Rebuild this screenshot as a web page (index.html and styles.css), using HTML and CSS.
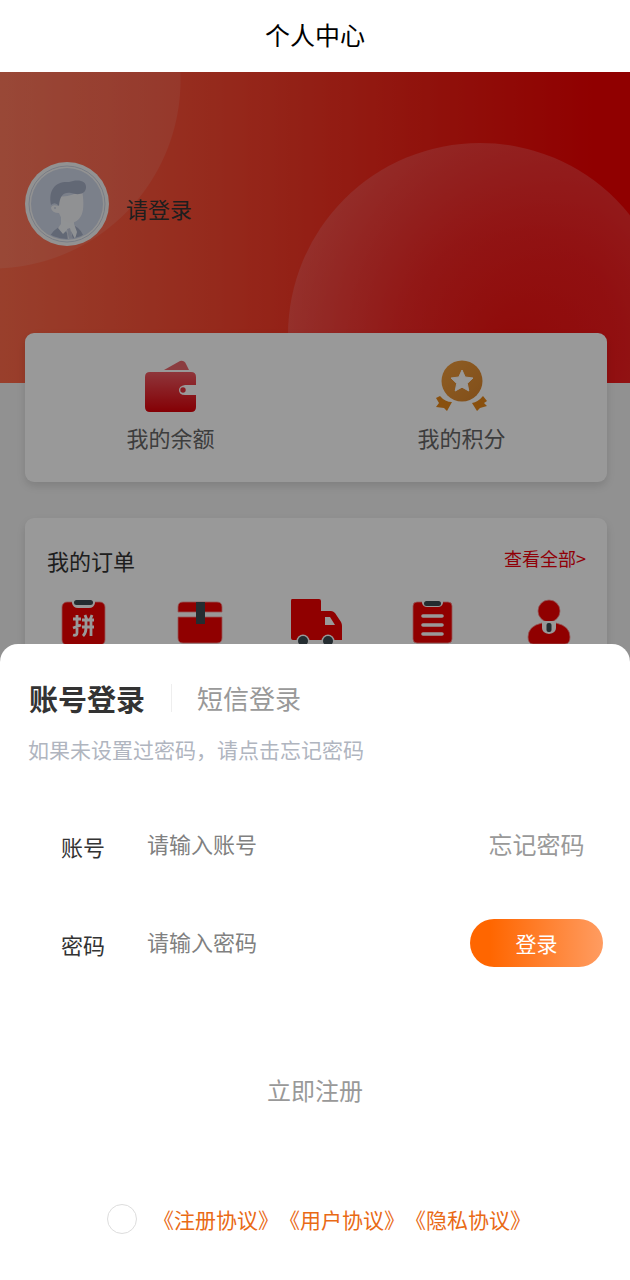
FILE: index.html
```html
<!DOCTYPE html>
<html lang="zh-CN">
<head>
<meta charset="utf-8">
<meta name="viewport" content="width=device-width, initial-scale=1">
<title>个人中心</title>
<link rel="stylesheet" href="styles.css">
</head>
<body>
<header class="topbar"><h1 class="topbar-title">个人中心</h1></header>
<main class="page">
  <section class="hero">
    <svg class="avatar" viewBox="0 0 84 84" aria-hidden="true">
      <defs><clipPath id="face"><circle cx="42" cy="42" r="35"/></clipPath></defs>
      <circle cx="42" cy="42" r="42" fill="#f4f4f4"/>
      <circle cx="42" cy="42" r="38" fill="none" stroke="#c9d0df" stroke-width="1"/>
      <circle cx="42" cy="42" r="36" fill="#cdd5e6"/>
      <g clip-path="url(#face)">
        <path d="M23 80Q25 69 36 64L42 71L50 64Q58 68 60 80Z" fill="#a4adc4"/>
        <path d="M36 54V62L33 66L38 72L42 68L43 79H48L46 69L50 77L52 70L49 62V54Z" fill="#f1f3f7"/>
        <path d="M42 67L45 66L48 78L44 78Z" fill="#c3cadb"/>
        <path d="M34 34Q44 36 57 28C60 45 59 60 45 61Q37 60 34 51Q27 51 26 46Q27 42 33 44Z" fill="#f1f2f5"/>
        <path d="M26 43C23 27 31 19 44 20C52 17 62 18 61 26C60 33 52 33 46 31C38 30 35 34 34 44Q30 39 26 43Z" fill="#a4adc4"/>
        <circle cx="30" cy="46" r="1" fill="#c7cede"/>
      </g>
    </svg>
    <span class="hero-name">请登录</span>
  </section>

  <section class="card wallet">
    <div class="wallet-item">
      <svg class="icon" viewBox="0 0 52 52" aria-hidden="true">
        <defs><linearGradient id="wal" x2="0" y2="1"><stop offset="0" stop-color="#ee5a62"/><stop offset="1" stop-color="#dd0008"/></linearGradient></defs>
        <path d="M19 10L35 1Q39 0 41 4L44 10Z" fill="#e8666b"/>
        <path d="M5 12H46Q51 12 51 17V25H40Q34 26 34 30Q34 35 40 35H51V47Q51 52 46 52H5Q0 52 0 47V17Q0 12 5 12Z" fill="url(#wal)"/>
        <circle cx="38" cy="30" r="2.700" fill="#e5333d"/>
      </svg>
      <span>我的余额</span>
    </div>
    <div class="wallet-item">
      <svg class="icon" viewBox="0 0 52 52" aria-hidden="true">
        <defs><linearGradient id="med" x2="1" y2="1"><stop offset="0" stop-color="#ee9c3c"/><stop offset="1" stop-color="#d8832b"/></linearGradient></defs>
        <path d="M4 36Q9 42 16 42L11 51L8 48L0 47L3 43L0 38Z M47 36Q42 42 36 43L41 51L44 48L51 46L48 43L51 41Z" fill="#e58618"/>
        <circle cx="26" cy="21" r="20.500" fill="url(#med)"/>
        <path d="M26 10L29.200 17L37 18L31.300 23.400L32.800 31L26 27.200L19.200 31L20.700 23.400L15 18L22.800 17Z" fill="#fff" stroke="#fff" stroke-width="1" stroke-linejoin="round"/>
      </svg>
      <span>我的积分</span>
    </div>
  </section>

  <section class="card orders">
    <div class="orders-head">
      <h2 class="orders-title">我的订单</h2>
      <a class="orders-all" href="#">查看全部&gt;</a>
    </div>
    <div class="orders-list">
      <svg class="icon" viewBox="0 0 52 52" aria-hidden="true">
        <rect x="5" y="3" width="43" height="43" rx="5" fill="#f00000" stroke="#fa9292" stroke-width=".8"/>
        <path d="M15 2H38V4Q37 9 32 9H21Q16 9 15 4Z" fill="#fff"/>
        <rect x="17" y="1" width="19" height="5" rx="2.500" fill="#3c4a50"/>
        <path d="M16 20H24M20 16V34Q20 37 16 36M16 29L24 26M25 21H37M25 28H37M29 21V29Q29 34 26 37M34 21V37M28 16L30 21M35 16L33 21" fill="none" stroke="#fff" stroke-width="2.800"/>
      </svg>
      <svg class="icon" viewBox="0 0 52 52" aria-hidden="true">
        <path d="M9 3H43Q48 3 48 8V13H4V8Q4 3 9 3ZM4 18H48V39Q48 44 43 44H9Q4 44 4 39Z" fill="#f00000" stroke="#fa9292" stroke-width=".8"/>
        <rect x="22" y="3" width="9" height="22" fill="#3c4a50"/>
      </svg>
      <svg class="icon" viewBox="0 0 52 52" aria-hidden="true">
        <path d="M2 0H29Q31 0 31 2V12H41Q43 12 45 14L51 23Q52 25 52 27V41H3Q1 41 1 39V2Q1 0 2 0Z" fill="#f00000"/>
        <path d="M35 18H40L45 26H35Z" fill="#fff"/>
        <circle cx="13" cy="42" r="6.500" fill="#fff"/><circle cx="38" cy="42" r="6.500" fill="#fff"/>
        <circle cx="13" cy="42" r="5" fill="#3c4a50"/><circle cx="38" cy="42" r="5" fill="#3c4a50"/>
      </svg>
      <svg class="icon" viewBox="0 0 52 52" aria-hidden="true">
        <rect x="7" y="3" width="39" height="41" rx="4" fill="#f00000" stroke="#fa9292" stroke-width=".8"/>
        <path d="M16 2H37V4Q36 8 32 8H21Q17 8 16 4Z" fill="#fff"/>
        <rect x="18" y="2" width="17" height="5" rx="2.500" fill="#3c4a50"/>
        <path d="M17 17H36M17 26H36M17 35H36" stroke="#fff" stroke-width="3.600" stroke-linecap="round"/>
      </svg>
      <svg class="icon" viewBox="0 0 52 52" aria-hidden="true">
        <circle cx="26" cy="12" r="11" fill="#f00000" stroke="#fa9292" stroke-width=".8"/>
        <path d="M19 24Q5 27 5 38Q5 45 10 45H42Q47 45 47 38Q47 27 33 24Z" fill="#f00000" stroke="#fa9292" stroke-width=".8"/>
        <path d="M19 22H33V29Q33 34 26 35Q19 34 19 29Z" fill="#fff"/>
        <rect x="23.500" y="24" width="5" height="9" rx="2" fill="#3c4a50"/>
      </svg>
    </div>
  </section>
  <div class="mask"></div>
</main>

<form class="sheet" role="dialog" aria-label="账号登录">
  <div class="tabs">
    <button class="tab tab-active" type="button">账号登录</button>
    <button class="tab" type="button">短信登录</button>
  </div>
  <p class="hint">如果未设置过密码，请点击忘记密码</p>
  <div class="fields">
    <div class="field">
      <label class="field-label" for="account">账号</label>
      <input class="field-input" id="account" type="text" placeholder="请输入账号">
      <a class="link" href="#">忘记密码</a>
    </div>
    <div class="field">
      <label class="field-label" for="password">密码</label>
      <input class="field-input" id="password" type="password" placeholder="请输入密码">
      <button class="submit" type="submit">登录</button>
    </div>
  </div>
  <a class="link register" href="#">立即注册</a>
  <div class="agreement">
    <input class="agree-check" id="agree" type="checkbox" aria-label="同意协议">
    <div class="agree-links"><a href="#">《注册协议》</a><a href="#">《用户协议》</a><a href="#">《隐私协议》</a></div>
  </div>
</form>
</body>
</html>
```
FILE: styles.css
```css
* {
  box-sizing: border-box;
}

body {
  display: flex;
  flex-direction: column;
  height: 100vh;
  margin: 0;
  overflow: hidden;
  background: #f2f2f2;
  color: #333;
  font-family: "Noto Sans CJK SC", sans-serif;
  font-size: 22px;
  line-height: 32px;
}

h1, h2, p {
  margin: 0;
  font-weight: 400;
}

a {
  text-decoration: none;
}

button {
  padding: 0;
  border: 0;
  background: none;
  font: inherit;
}

.topbar {
  padding: 16px 0 20px;
  background: #fff;
  text-align: center;
}

.topbar-title {
  color: #000;
  font-size: 25px;
  line-height: 36px;
}

.page {
  position: relative;
  flex: 1;
  overflow: hidden;
}

.mask {
  position: absolute;
  inset: 0;
  background: rgba(0, 0, 0, 0.4);
}

.hero {
  position: relative;
  display: flex;
  gap: 17px;
  align-items: center;
  padding: 90px 25px 137px;
  overflow: hidden;
  background:
    radial-gradient(circle at -8px 8px, rgba(255, 255, 255, 0.1) 188px, transparent 189px),
    linear-gradient(90deg, #ff6a4a, #f9452f 35%, #f11e14 68%, #f00000 95%);
}

.hero::after {
  content: "";
  position: absolute;
  left: 288px;
  top: 71px;
  width: 384px;
  height: 384px;
  border-radius: 50%;
  background: radial-gradient(circle at 222px 200px, rgba(240, 20, 20, 0.6), rgba(243, 45, 48, 0.6) 110px, rgba(250, 115, 115, 0.5) 240px);
}

.avatar {
  width: 84px;
  height: 84px;
}

.hero-name {
  padding-top: 7px;
}

.card {
  position: relative;
  margin: 0 23px 36px 25px;
  border-radius: 9px;
  background: #fff;
  box-shadow: 0 4px 9px rgba(0, 0, 0, 0.12);
}

.wallet {
  display: grid;
  grid-template-columns: 1fr 1fr;
  margin-top: -50px;
  padding: 27px 0 29px;
  color: #666;
}

.wallet-item {
  display: flex;
  flex-direction: column;
  gap: 9px;
  align-items: center;
}

.icon {
  width: 52px;
  height: 52px;
}

.orders {
  padding: 24px 0;
}

.orders-head {
  display: flex;
  justify-content: space-between;
  padding: 0 21px 4px 22px;
}

.orders-title {
  padding-top: 2px;
  font-size: 22px;
}

.orders-all {
  color: #f0000c;
  font-size: 18px;
}

.orders-list {
  display: grid;
  grid-template-columns: repeat(5, 1fr);
  justify-items: center;
  padding-top: 19px;
}

.sheet {
  position: fixed;
  inset: auto 0 0;
  padding: 34px 0 45px;
  border-radius: 18px 18px 0 0;
  background: #fff;
}

.tabs {
  display: flex;
  align-items: center;
  padding: 0 29px;
}

.tab {
  padding-left: 25px;
  border-left: 1px solid #eee;
  color: #999;
  font-size: 26px;
  line-height: 28px;
}

.tab-active {
  padding: 0 26px 0 0;
  border: 0;
  color: #333;
  font-size: 29px;
  font-weight: 700;
  line-height: 40px;
}

.hint {
  padding: 15px 28px 0;
  color: #b0b5bf;
  font-size: 21px;
}

.fields {
  display: grid;
  gap: 50px;
  padding: 56px 27px 0 61px;
}

.field {
  display: grid;
  grid-template-columns: 86px 1fr 133px;
  align-items: center;
  height: 48px;
}

.field-label {
  padding-top: 1px;
}

.field-input {
  width: 100%;
  min-width: 0;
  padding: 0 0 4px;
  border: 0;
  outline: 0;
  background: none;
  font: inherit;
}

.field-input::placeholder {
  color: #808080;
}

.link {
  padding-bottom: 2px;
  color: #999;
  font-size: 24px;
  line-height: 36px;
  text-align: center;
}

.submit {
  height: 48px;
  border-radius: 24px;
  background: linear-gradient(90deg, #ff6600 15%, #ff9c61);
  color: #fff;
  font-size: 21px;
}

.register {
  display: block;
  width: max-content;
  margin: 105px auto 93px;
}

.agreement {
  display: flex;
  gap: 16px;
  align-items: center;
  padding-left: 107px;
}

.agree-check {
  width: 30px;
  height: 30px;
  margin: 0;
  border: 1px solid #ddd;
  border-radius: 50%;
  appearance: none;
}

.agree-check:checked {
  background: #ff6600;
}

.agree-links {
  display: flex;
  font-size: 21px;
}

.agree-links a {
  color: #e96a15;
}
```
